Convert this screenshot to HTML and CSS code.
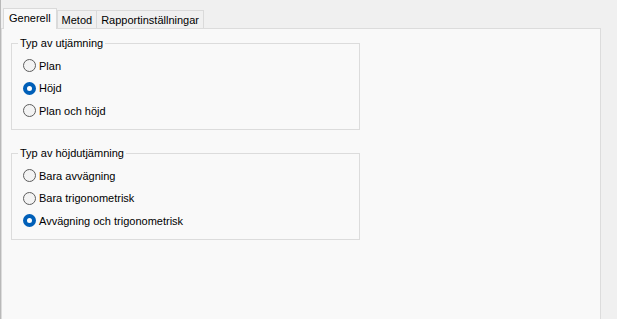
FILE: index.html
```html
<!DOCTYPE html>
<html lang="sv">
<head>
  <meta charset="UTF-8">
  <title>Inställningar</title>
  <link rel="stylesheet" href="styles.css">
</head>
<body>
  <div class="tabs">
    <div class="tab selected">Generell</div>
    <div class="tab">Metod</div>
    <div class="tab">Rapportinställningar</div>
  </div>
  <div class="panel">
    <!-- Typ av utjämning -->
    <div class="group">
      <span class="group-title">Typ av utjämning</span>
      <label class="option"><input type="radio" name="utj"> Plan</label>
      <label class="option"><input type="radio" name="utj" checked> Höjd</label>
      <label class="option"><input type="radio" name="utj"> Plan och höjd</label>
    </div>

    <!-- Typ av höjdutjämning -->
    <div class="group">
      <span class="group-title">Typ av höjdutjämning</span>
      <label class="option"><input type="radio" name="hojd"> Bara avvägning</label>
      <label class="option"><input type="radio" name="hojd"> Bara trigonometrisk</label>
      <label class="option"><input type="radio" name="hojd" checked> Avvägning och trigonometrisk</label>
    </div>
  </div>
</body>
</html>
```

FILE: styles.css
```css
body {
  margin: 0;
  height: 319px;
  overflow: hidden;
  background-color: #f0f0f0;
  border-left: 1px solid #b9b9b9;
  font-family: "Liberation Sans", Arial, sans-serif;
  font-size: 11px;
  color: #000;
}
.tabs {
  display: flex;
  align-items: flex-end;
  height: 28px;
  padding-left: 2px;
}
.tab {
  height: 17px;
  line-height: 19px;
  padding: 0 4px;
  border: 1px solid #dadada;
  border-bottom: none;
  margin-left: -1px;
  background-color: #f0f0f0;
}
.tab.selected {
  position: relative;
  z-index: 1;
  height: 20px;
  line-height: 18px;
  margin-left: 0;
  margin-right: 1px;
  margin-bottom: -1px;
  padding: 0 5px;
  background-color: #f9f9f9;
}
.panel {
  width: 598px;
  height: 300px;
  border: 1px solid #dcdcdc;
  background-color: #f9f9f9;
  padding-top: 14px;
}
.group {
  position: relative;
  width: 336px;
  margin-left: 9px;
  margin-bottom: 23px;
  padding: 10.5px 0 7px 11px;
  border: 1px solid #dcdcdc;
}
.group-title {
  position: absolute;
  top: -9px;
  left: 6px;
  padding: 0 2px;
  background-color: #f9f9f9;
  line-height: 16px;
}
.option {
  display: flex;
  align-items: center;
  height: 22.5px;
}
.option input {
  appearance: none;
  width: 13px;
  height: 13px;
  margin: 0 3px 0 0;
  border: 1px solid #5d5d5d;
  border-radius: 50%;
  background-color: #f3f3f3;
  box-sizing: border-box;
}
.option input:checked {
  border: 4px solid #005fb8;
  background-color: #fff;
}
```
